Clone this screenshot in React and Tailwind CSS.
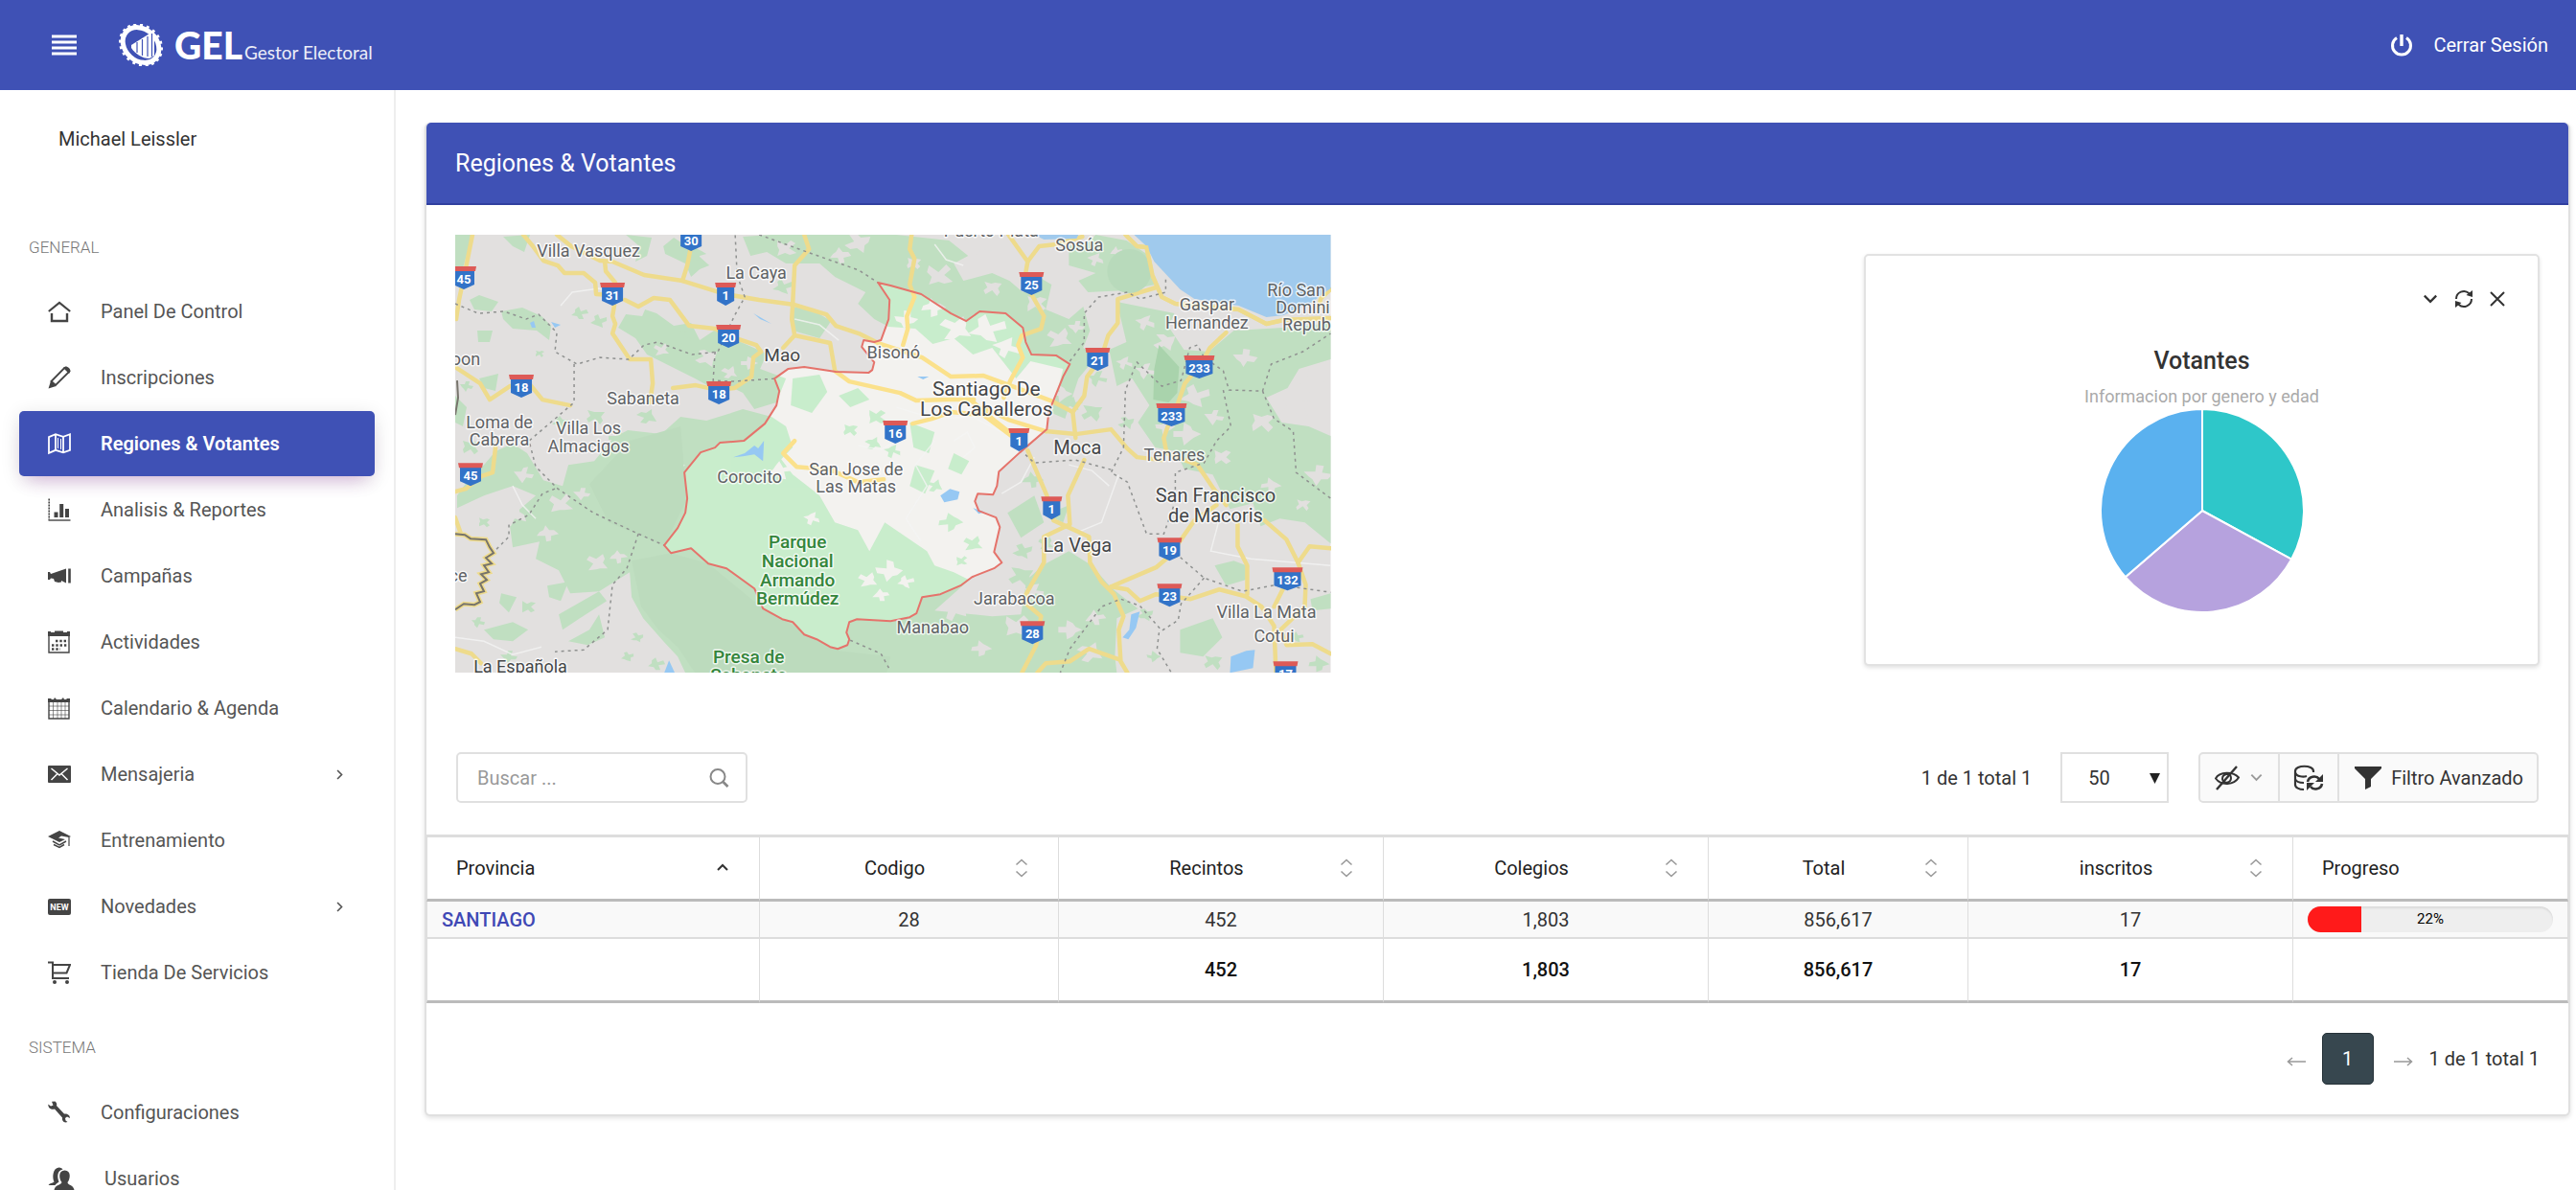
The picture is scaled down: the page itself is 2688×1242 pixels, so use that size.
import React, { useState } from 'react';

const roboto = "font-['Roboto',sans-serif]";

/* ---------- Icons ---------- */

const Icon = ({ children, className = 'size-6', box = '0 0 24 24' }) => (
    <svg viewBox={box} className={className} fill="none" stroke="currentColor" strokeWidth="2" aria-hidden="true">
        {children}
    </svg>
);

const HomeIcon = () => (
    <Icon>
        <path d="M.8 12 12 3l11.2 9" strokeWidth="2.2" />
        <path d="M4 14v8h16v-8" strokeWidth="2.4" />
    </Icon>
);

const PencilIcon = () => (
    <Icon>
        <path d="M3.5 16 17.5 1.8c1.6-1 5.4 2.6 4.4 4.4L8 20z" strokeWidth="1.8" />
        <path d="M3 15.5 8.5 21 .5 23.6z" fill="currentColor" stroke="none" />
        <path d="m16 2 2.5-1.6c2.5 0 5 2.5 5 5L22 8z" fill="currentColor" stroke="none" />
    </Icon>
);

const MapIcon = () => (
    <Icon>
        <path d="M1 5.2 8 2.2l8 2.6 7-2.6v16.6l-7 2.6-8-2.6-7 3zM8 2.2v16.6M16 4.8v16.6" strokeWidth="1.8" />
        <path d="M10.5 6v11M13.5 7v11" strokeWidth="1" />
    </Icon>
);

const ChartIcon = () => (
    <Icon>
        <path d="M1.2.5v22" strokeWidth="1.6" strokeDasharray="2 1" />
        <path d="M.5 23h23" strokeWidth="1.4" />
        <path d="M8.5 14.5V20M14.2 6v14M20 11v9" strokeWidth="4" />
    </Icon>
);

const MegaphoneIcon = () => (
    <Icon>
        <path d="M0 8h2l1 2L19 4.500v15L14 17v1.500l-3 .5-4-1-1-3-3-.500L2 16H0z" fill="currentColor" stroke="none" />
        <path d="M22.500 4.500v15" strokeWidth="2.600" />
    </Icon>
);

const EventIcon = () => (
    <Icon>
        <path d="M1 3v20h21V3" strokeWidth="1.4" />
        <path d="M0 1h3v1h4V.5h9V2h4V1h3v5H0z" fill="currentColor" stroke="none" />
        <path d="M8 11h13M4 15.500h17M4 19.500h9" strokeDasharray="2.400 1.900" strokeWidth="2.400" />
    </Icon>
);

const CalendarIcon = () => (
    <Icon>
        <path d="M1 3v20h21V3" strokeWidth="1.4" />
        <path d="M0 2h3l1 1h2l1-2 2 2h5l2-2 1 2h2l1-1h3v4H0z" fill="currentColor" stroke="none" />
        <path d="M1 10h21M1 14.500h21M1 19h21M5.500 6v17M10 6v17M14 6v17M18 6v17" strokeWidth=".6" />
    </Icon>
);

const MailIcon = () => (
    <Icon>
        <rect x="0" y="3" width="24" height="18" rx="1" fill="currentColor" stroke="none" />
        <path d="m3.500 6 8.500 7 8.500-7M3.500 18 9.500 12M20.500 18l-6-6" stroke="#fff" strokeWidth="1.5" />
    </Icon>
);

const GraduationIcon = () => (
    <Icon>
        <path d="m0 8 12-6 12 6-2 1-8-1.500-3 2 7 1.500-6 3z" fill="currentColor" stroke="none" />
        <path d="m5 13 7 4 7-4M6 16.500l6 3 5-3" strokeWidth="1.5" />
        <path d="M22 9v9" strokeWidth="1.2" />
    </Icon>
);

const NewIcon = () => (
    <Icon>
        <rect x="0" y="4" width="24" height="17" rx="2" fill="currentColor" stroke="none" />
        <text x="12" y="16" fontSize="9" fontWeight="700" textAnchor="middle" fill="#fff" stroke="none">
            NEW
        </text>
    </Icon>
);

const CartIcon = () => (
    <Icon>
        <path d="M0 1.500h5V18h17M5 12.500h14.500L23 4H5" strokeWidth="2" />
        <circle cx="7" cy="22" r="2" fill="currentColor" stroke="none" />
        <circle cx="20" cy="22" r="2" fill="currentColor" stroke="none" />
    </Icon>
);

const WrenchIcon = () => (
    <Icon>
        <path
            d="M4 .8 7.500.5c2 1.500 2 3.500 1.500 4.500l8 8.500c3-.5 6 1 6 4.500l-3-1.500-2 1.500.500 2.500 2 1.500c-4 1.500-6-1.500-5.500-4.500L7 8.500C4 9.500 0 8 .3 3.500L3 5.500l2.500-1z"
            fill="currentColor"
            stroke="none"
        />
    </Icon>
);

const UsersIcon = () => (
    <Icon className="h-6 w-7" box="0 0 27 24">
        <path d="M0 19c1-2 4-2 6-3.500C4 12 4 1 11 .5c2 0 3.500 1 4 2-6 1-6 8-4 13-2 1.500-3 2-4 3.500z" fill="currentColor" stroke="none" />
        <path
            d="M17 3.500c7 0 6 9 3 12.500 0 3 6 2.500 7 8H6c1-5.500 7-5 8-8-3-3.500-4-12.500 3-12.500z"
            fill="currentColor"
            stroke="none"
        />
    </Icon>
);

const ChevronIcon = ({ className }) => (
    <Icon className={className} box="0 0 16 16">
        <path d="m2.500 5 5.500 5.500L13.500 5" />
    </Icon>
);

const SortIcon = ({ active }) =>
    active ? (
        <Icon className="h-5 w-4 text-[#333]" box="0 0 16 20">
            <path d="m3 12 5-5 5 5" />
        </Icon>
    ) : (
        <Icon className="h-5 w-4 text-[#999]" box="0 0 16 20">
            <path d="m2.500 6.500 5.500-5 5.500 5M2.500 13.500l5.500 5 5.500-5" strokeWidth="1.6" />
        </Icon>
    );

/* ---------- Header ---------- */

const teeth = Array.from({ length: 20 }, (_, i) => i * 18);

const Logo = () => (
    <a href="#inicio" className="flex items-center">
        <svg viewBox="0 0 46 44" className="h-11 w-[46px]" aria-hidden="true">
            <g transform="rotate(42 23 22)">
                <ellipse cx="23" cy="22" rx="20.500" ry="16.500" fill="none" stroke="#fff" strokeWidth="5" />
                {teeth.map((a) => (
                    <rect
                        key={a}
                        x={23 + 23 * Math.cos((a * Math.PI) / 180) - 1.5}
                        y={22 + 19.5 * Math.sin((a * Math.PI) / 180) - 1.5}
                        width="3"
                        height="3"
                        fill="#fff"
                        transform={`rotate(${a} ${23 + 23 * Math.cos((a * Math.PI) / 180)} ${22 + 19.5 * Math.sin((a * Math.PI) / 180)})`}
                    />
                ))}
            </g>
            <path d="m13 22 24-15v26l-5 3c-8 0-15-5-19-11z" fill="#fff" />
            <path d="M19 19v11M24.500 16v17M30 13v21M34.500 10v24" stroke="#3f51b5" strokeWidth="1.2" />
        </svg>
        <span className="ml-3 flex items-baseline gap-0.5 font-['Lato',sans-serif] text-white">
            <span className="text-[39px] leading-[44px] font-black">GEL</span>
            <span className="text-[19px] text-white/90">Gestor Electoral</span>
        </span>
    </a>
);

const Header = ({ onToggle }) => (
    <header className="flex h-[94px] shrink-0 items-center justify-between bg-[#3f51b5] pr-[29px] pl-[54px] text-white">
        <div className="flex items-center gap-11">
            <button type="button" onClick={onToggle} aria-label="Menu">
                <Icon className="h-[22px] w-[26px]" box="0 0 26 22">
                    <path d="M0 2h26M0 8h26M0 14h26M0 20h26" strokeWidth="3" />
                </Icon>
            </button>
            <Logo />
        </div>
        <a href="#salir" className="flex items-center gap-[21px] text-[20px]">
            <Icon className="size-6">
                <path d="M7 4.500a9.500 9.500 0 1 0 10 0" strokeWidth="3" />
                <path d="M12 1v12" strokeWidth="3.4" />
            </Icon>
            Cerrar Sesión
        </a>
    </header>
);

/* ---------- Sidebar ---------- */

const generalItems = [
    { id: 'panel', label: 'Panel De Control', icon: HomeIcon },
    { id: 'inscripciones', label: 'Inscripciones', icon: PencilIcon },
    { id: 'regiones', label: 'Regiones & Votantes', icon: MapIcon },
    { id: 'analisis', label: 'Analisis & Reportes', icon: ChartIcon },
    { id: 'campanas', label: 'Campañas', icon: MegaphoneIcon },
    { id: 'actividades', label: 'Actividades', icon: EventIcon },
    { id: 'calendario', label: 'Calendario & Agenda', icon: CalendarIcon },
    { id: 'mensajeria', label: 'Mensajeria', icon: MailIcon, children: true },
    { id: 'entrenamiento', label: 'Entrenamiento', icon: GraduationIcon },
    { id: 'novedades', label: 'Novedades', icon: NewIcon, children: true },
    { id: 'tienda', label: 'Tienda De Servicios', icon: CartIcon },
];

const systemItems = [
    { id: 'configuraciones', label: 'Configuraciones', icon: WrenchIcon },
    { id: 'usuarios', label: 'Usuarios', icon: UsersIcon },
];

const NavItem = ({ item, active, onSelect }) => {
    const ItemIcon = item.icon;
    return (
        <li>
            <a
                href={`#${item.id}`}
                onClick={() => onSelect(item.id)}
                className={
                    active
                        ? 'flex h-[68px] items-center gap-[31px] rounded-[5px] bg-[#3f51b5] px-[30px] text-[20px] font-semibold text-white shadow-[0_12px_20px_-10px_rgba(156,39,176,0.3),0_4px_20px_rgba(0,0,0,0.12)]'
                        : 'flex h-[68px] items-center gap-[31px] px-[30px] text-[20px] text-[#555]'
                }
            >
                <span className={active ? 'text-white' : 'text-[#444]'}>
                    <ItemIcon />
                </span>
                <span className="flex-1">{item.label}</span>
                {item.children && <ChevronIcon className="size-[13px] -rotate-90 text-[#555]" />}
            </a>
        </li>
    );
};

const Sidebar = ({ active, onSelect }) => (
    <aside className="w-[413px] shrink-0 overflow-hidden border-r-2 border-[#eee] pt-9">
        <div className="pl-[61px] text-[20px] leading-[30px] text-[#333]">Michael Leissler</div>
        <h2 className="mt-[86px] pl-[30px] text-[17px] leading-6 font-light text-[#777]">GENERAL</h2>
        <ul className="mx-5 mt-[21px] flex flex-col gap-px">
            {generalItems.map((item) => (
                <NavItem key={item.id} item={item} active={active === item.id} onSelect={onSelect} />
            ))}
        </ul>
        <h2 className="mt-8 pl-[30px] text-[17px] leading-6 font-light text-[#777]">SISTEMA</h2>
        <ul className="mx-5 mt-[22px] flex flex-col gap-px">
            {systemItems.map((item) => (
                <NavItem key={item.id} item={item} active={active === item.id} onSelect={onSelect} />
            ))}
        </ul>
    </aside>
);

/* ---------- Map ---------- */

const province =
    'M441 50 453 68 452 88 444 110 437 112 426 110 424 117 437 133 435 141 431 144 397 143 364 138 347 140 333 150 338 163 335 178 323 197 301 215 276 217 271 222 256 227 239 248 242 275 240 290 232 306 218 324 225 332 246 327 264 343 283 348 312 369 321 390 341 401 352 404 364 417 377 422 391 430 399 432 409 428 411 422 408 415 411 404 419 401 454 403 474 399 481 395 487 378 506 375 527 366 539 357 562 348 570 342 562 331 568 305 564 295 546 288 542 278 545 270 561 271 565 262 567 247 589 227 617 203 619 185 634 148 641 135 627 126 601 125 595 112 592 97 574 82 547 80 533 90 517 82 486 62 454 53Z';

const forests = [
    'M0 0H18L8 35H0Z',
    'M50 2 78 0 72 18 60 12Z',
    'M178 0 205 3 200 22 188 28 192 12Z',
    'M217 12 228 3 246 15 265 32 255 36 246 44 240 30 219 20Z',
    'M300 2 330 0 460 0 515 6 535 22 520 30 530 48 560 40 578 48 592 60 610 45 622 52 616 78 640 88 655 75 662 100 655 118 668 128 650 150 636 192 622 186 634 140 600 132 585 150 560 118 540 125 520 108 498 114 480 98 452 96 437 88 420 72 428 60 396 44 380 30 345 30 325 18 308 22Z',
    'M352 75 375 80 392 90 380 108 352 100Z',
    'M170 97 178 83 195 85 198 78 210 82 228 95 246 92 255 110 270 100 300 113 325 124 318 140 345 150 335 175 312 182 300 165 280 155 268 160 250 150 230 140 200 125 188 108Z',
    'M15 68 25 63 45 70 38 80 20 78Z',
    'M48 80 70 76 90 85 100 95 98 110 85 100 60 98 50 88Z',
    'M23 100 39 100 36 112 24 112Z',
    'M25 150 45 145 42 163 30 160Z',
    'M0 168 12 180 8 200 0 196Z',
    'M2 272 12 258 30 240 42 226 60 218 75 228 92 256 112 262 118 240 145 236 165 212 180 204 215 208 235 190 262 194 300 182 330 190 345 200 352 222 340 234 352 250 380 272 396 300 420 308 432 330 448 300 470 315 492 330 500 345 520 352 536 360 500 392 560 398 590 396 596 360 614 344 640 330 664 345 684 368 712 390 690 400 688 440 690 457 240 457 232 440 218 425 196 400 184 378 182 352 150 372 120 374 108 350 84 338 88 320 60 326 56 296 84 272 60 262 30 272 2 285Z',
    'M96 366 118 362 110 382 98 378Z',
    'M48 374 64 378 56 394 46 384Z',
    'M108 396 136 380 150 372 158 382 130 400 112 412Z',
    'M30 412 60 404 76 412 60 424 40 422Z',
    'M150 396 156 420 138 428 118 424 140 412Z',
    'M640 12 660 8 668 0 700 6 724 22 730 52 700 58 660 60 650 48 668 40 640 32Z',
    'M690 70 720 76 750 82 744 96 760 120 786 122 812 100 880 96 913 92 913 130 880 140 868 160 846 170 862 196 890 200 913 210 913 322 886 300 860 296 840 304 832 280 808 286 790 250 760 244 752 226 730 222 712 196 724 178 706 150 690 158 682 120 700 112Z',
    'M792 345 812 340 828 346 824 360 804 366Z',
    'M892 380 913 374 913 390 894 392Z',
    'M756 412 790 400 800 420 780 440 756 436Z',
    'M576 290 604 272 614 300 590 316Z',
    'M640 282 634 300 616 292Z',
    'M480 240 500 246 490 270 474 262Z',
    'M520 228 536 236 528 250 514 244Z',
    'M474 196 500 206 494 228 478 222Z',
    'M400 168 420 160 432 172 412 180Z',
    'M352 150 380 146 388 164 372 186 350 178Z',
];

/* clearings: [x, y, radius] */
const clearings = [
    [345, 14, 7], [402, 22, 6], [420, 8, 8], [478, 30, 5], [505, 42, 9], [546, 10, 9], [560, 56, 6], [498, 76, 7],
    [522, 98, 10], [556, 98, 11], [470, 88, 7], [575, 118, 8], [606, 72, 7], [630, 108, 8], [648, 96, 5], [632, 166, 6],
    [215, 120, 5], [262, 128, 7], [286, 144, 5], [306, 134, 5], [110, 280, 8], [132, 270, 5], [72, 250, 6], [60, 292, 9],
    [96, 312, 6], [148, 342, 7], [170, 336, 5], [340, 246, 7], [372, 296, 5], [430, 360, 6], [452, 350, 8], [444, 376, 5],
    [470, 362, 5], [520, 392, 8], [548, 432, 6], [586, 408, 9], [604, 372, 6], [640, 412, 7], [668, 400, 6], [662, 436, 8],
    [720, 92, 6], [740, 112, 7], [772, 168, 9], [792, 190, 6], [824, 128, 7], [842, 196, 8], [876, 182, 10], [892, 152, 9],
    [740, 200, 6], [762, 208, 8], [800, 232, 6], [850, 262, 6], [884, 282, 5], [900, 250, 8], [690, 18, 4], [668, 26, 5],
    [720, 142, 6], [698, 134, 5],
];

const thickets = [
    [250, 20, 6], [130, 82, 5], [150, 90, 5], [342, 54, 6], [236, 108, 6], [12, 158, 4], [88, 124, 3], [412, 204, 5],
    [440, 190, 6], [436, 218, 5], [456, 226, 5], [500, 262, 5], [516, 300, 7], [540, 322, 6], [528, 340, 4], [602, 256, 6],
    [592, 330, 6], [616, 322, 5], [590, 356, 8], [670, 150, 6], [664, 186, 7], [646, 176, 5], [700, 196, 5], [728, 440, 4],
    [720, 396, 5], [790, 446, 6], [900, 448, 6], [878, 420, 4], [30, 300, 4], [76, 388, 5], [56, 440, 5], [180, 440, 4],
    [210, 448, 5], [24, 404, 4], [190, 420, 4], [146, 190, 6], [170, 212, 6], [110, 196, 5], [16, 222, 6], [200, 190, 6],
];

// Jagged outline round a point, stable for a given position
const jagged = ([x, y, r]) =>
    Array.from({ length: 11 }, (_, i) => {
        const a = (i / 11) * Math.PI * 2;
        const k = 0.3 + Math.abs(Math.sin(x * 3.1 + y * 1.7 + i * 4.3)) * 1.2;
        return `${Math.round(x + Math.cos(a) * r * k * 1.3)},${Math.round(y + Math.sin(a) * r * k)}`;
    }).join(' ');

const roads = [
    'M71 0 81 12 92 27 107 32 114 40 134 40 146 50 147 62 164 63',
    'M106 0 121 12 151 27 164 28 197 42 237 48 282 62 317 68 354 73 387 83 397 95 421 103 441 113 487 128 517 148 551 147 581 158 621 173 644 185',
    'M156 28 157 38 167 50',
    'M18 0 11 35 4 68 1 88',
    'M246 12 242 32 237 48',
    'M177 68 191 75 207 66 224 68 244 95 271 98 284 105 314 115 319 122 311 128 309 148 291 160 274 162 251 157 227 160',
    'M166 73 164 85 167 93 164 103 182 130 204 130 206 155 203 175',
    'M364 0 369 15 354 32 352 72 351 88 354 105 391 113 396 142 411 153 464 165 481 173 514 172 541 172',
    'M354 105 342 118',
    'M0 138 26 155 36 172 57 158 77 155 91 172 120 178',
    'M476 0 474 15 479 25 474 52 479 65 471 85 472 98 467 115',
    'M577 0 597 28 594 45 601 62 614 85 611 98 591 105 587 115 592 128 579 152 572 170',
    'M597 28 609 12 627 10 654 2',
    'M699 0 711 12 721 13 727 42 737 65 751 72 817 78 846 93 864 89 913 87',
    'M900 76 903 66 913 57',
    'M731 55 691 67 691 92 681 105 677 118 671 132 659 148 656 168 644 185 647 212',
    'M616 205 647 208 684 203 701 223 711 232 737 235',
    'M804 102 787 118 778 135 761 155 754 175 745 195 739 212 742 228 774 240 791 265 804 282',
    'M477 197 497 192 517 185 551 188 587 215',
    'M537 172 564 195 588 214',
    'M551 180 577 193 616 205',
    'M597 225 617 272 624 298 661 315 662 342 674 362 687 375 697 398 692 412 694 445 701 457',
    'M656 235 639 272 641 302 614 315 614 342 597 372 592 382 611 398 606 428 591 457',
    'M607 457 616 447 641 445 661 432 692 443',
    'M684 367 731 347 745 335 771 298 794 282',
    'M684 367 701 370 714 382 731 375 767 380 797 370 824 377 841 388 854 408 856 457',
    'M816 302 816 325 826 345 826 375',
    'M844 298 867 318 879 342 891 325 913 327',
    'M879 342 887 365 886 388 861 412 867 428 894 427 913 437',
    'M864 368 854 388',
    'M42 222 39 248 27 252 11 265 0 268',
    'M0 295 6 312',
    'M0 432 17 437 27 447',
    'M354 215 342 228 356 242 391 245 420 258 447 255',
];

const minorRoads = [
    'M110 74 122 60 150 56 170 66', 'M354 88 380 94 400 110', 'M0 420 30 424 60 438 90 430', 'M239 240 220 256 216 276',
    'M60 262 70 282 84 296', 'M500 215 480 240 492 262 470 296 486 320', 'M604 232 590 258 570 270', 'M640 240 664 246 682 262',
    'M520 215 534 206 542 222 530 232', 'M796 300 788 330 830 338 913 345', 'M692 250 674 300 650 310', 'M500 10 512 26 530 32',
    'M460 180 500 192 540 190 570 206', 'M420 220 444 224 470 210',
];

const boundaries = [
    'M0 72 24 82 51 80 74 88 87 83 106 102 104 122 127 135 151 128 181 130 197 115 211 112 247 125 274 122 291 85 302 65 294 42 292 0',
    'M317 0 367 18 421 37 441 50',
    'M124 135 124 175 77 215 84 242 107 265 144 290 191 312 218 324',
    'M271 122 269 152 291 153 334 150',
    'M104 265 91 270 77 292 56 303 56 315 41 330',
    'M191 312 179 348 164 365 159 412 134 433 104 435',
    'M412 423 444 437 454 455',
    'M641 132 656 112 656 82 671 65 701 60 714 67 741 60 741 43',
    'M697 222 699 162 711 133 737 158 757 152 766 118 774 115 781 128 801 142 807 162 842 163 851 135 884 122 913 103',
    'M842 163 854 192 874 205 877 248 913 275',
    'M801 162 809 200 794 215 781 238 751 248 751 278 739 312 721 312 701 258 684 248 697 222',
    'M684 245 647 235 604 238 592 227',
    'M751 332 781 358 821 372 857 365 913 373',
    'M781 358 757 385 754 402 737 413 714 387 694 380 674 388 641 432 631 457',
    'M734 415 732 432 747 457',
];

const lakes = [
    'M290 232 302 228 312 220 316 223 322 215 321 236 312 229 300 231Z',
    'M506 272 516 265 526 268 524 276 510 279Z',
    'M540 285 552 289 546 291Z',
    'M705 396 714 393 710 410 702 422 696 420 703 412Z',
    'M809 440 825 434 834 433 832 452 808 457Z',
    'M218 457 223 444 229 457Z',
    'M78 92 82 90 84 97 80 97Z',
    'M100 91 110 94 104 97Z',
    'M311 82 330 93 318 88Z',
    'M482 148 494 148 488 151Z',
];

const shields = [
    [9, 45, '45'], [164, 62, '31'], [246, 5, '30'], [282, 62, '1'], [285, 106, '20'], [69, 158, '18'], [275, 165, '18'],
    [601, 51, '25'], [670, 130, '21'], [776, 138, '233'], [747, 188, '233'], [459, 206, '16'], [588, 214, '1'],
    [16, 250, '45'], [622, 285, '1'], [745, 328, '19'], [745, 376, '23'], [868, 359, '132'], [602, 415, '28'], [866, 457, '17'],
];

const towns = [
    [139, 23, 'Villa Vasquez'], [314, 46, 'La Caya'], [457, 129, 'Bisonó'], [651, 17, 'Sosúa'], [784, 79, 'Gaspar'],
    [784, 98, 'Hernandez'], [877, 64, 'Río San'], [884, 82, 'Domini'], [888, 100, 'Repub'], [750, 236, 'Tenares'],
    [583, 386, 'Jarabacoa'], [498, 416, 'Manabao'], [846, 400, 'Villa La Mata'], [854, 425, 'Cotui'], [307, 259, 'Corocito'],
    [418, 251, 'San Jose de'], [418, 269, 'Las Matas'], [139, 208, 'Villa Los'], [139, 227, 'Almacigos'], [46, 202, 'Loma de'],
    [46, 220, 'Cabrera'], [196, 177, 'Sabaneta'], [11, 136, 'oon'], [3, 362, 'ce'], [559, 2, 'Puerto Plata'],
];

const cities = [
    [341, 132, 'Mao', 19], [554, 168, 'Santiago De', 21], [554, 189, 'Los Caballeros', 21], [649, 229, 'Moca', 20],
    [793, 279, 'San Francisco', 20], [793, 300, 'de Macoris', 20], [649, 331, 'La Vega', 20], [68, 457, 'La Española', 18],
];

const parks = [
    [357, 327, 'Parque'], [357, 347, 'Nacional'], [357, 367, 'Armando'], [357, 386, 'Bermúdez'], [306, 447, 'Presa de'],
    [306, 466, 'Sabaneta'],
];

const Shield = ({ x, y, label }) => {
    const w = label.length === 3 ? 15 : label.length === 2 ? 12 : 10;
    return (
        <g transform={`translate(${x} ${y})`}>
            <path d={`M${-w + 1}-8V7L0 12 ${w - 1} 7V-8Z`} fill="#3273c8" />
            <path d={`M${-w - 1}-12H${w + 1}L${w}-7H${-w}Z`} fill="#dd5a57" />
            <text y="6" textAnchor="middle" fontSize="13" fontWeight="700" fill="#fff">
                {label}
            </text>
        </g>
    );
};

const Terrain = ({ land, green, road }) => (
    <>
        <rect width="913" height="457" fill={land} />
        <g fill={green}>
            {forests.map((d) => (
                <path key={d} d={d} />
            ))}
            {thickets.map((p) => (
                <polygon key={p.join()} points={jagged(p)} />
            ))}
        </g>
        <g fill={land}>
            {clearings.map((p) => (
                <polygon key={p.join()} points={jagged(p)} />
            ))}
        </g>
        <g fill="none" stroke="#f4f4f4" strokeWidth="1.500" opacity=".8">
            {minorRoads.map((d) => (
                <path key={d} d={d} />
            ))}
        </g>
        <g fill="none" stroke={road} strokeWidth="4.500" strokeLinejoin="round" strokeLinecap="round">
            {roads.map((d) => (
                <path key={d} d={d} />
            ))}
        </g>
    </>
);

const RegionMap = () => (
    <svg viewBox="0 0 913 457" className="w-[42%] shrink-0 self-start" role="img" aria-label="Mapa de Santiago">
        <clipPath id="province">
            <path d={province} />
        </clipPath>
        <Terrain land="#e2e0df" green="#c0dfc1" road="#eedb8c" />
        <path d="M182 215 235 200 239 248 242 275 218 324 160 300 140 260Z" fill="#bcdbbd" />
        <path d="M184 340 225 332 264 343 321 390 400 434 454 440 450 457 250 457 232 430 212 412 194 388Z" fill="#bcdbbd" />
        <circle cx="703" cy="38" r="23" fill="#b8dabb" />
        <path d="M734 115 755 138 753 165 744 175 728 172 729 140Z" fill="#a9d3ac" />
        <path d="M708 0 721 12 729 28 756 57 771 67 817 74 846 86 864 84 894 70 913 56V0Z" fill="#a0caed" />
        <path d="M604 0 614 5 648 4 650 0Z" fill="#a0caed" />
        <path d="M699 0 711 12 721 13 727 42 737 65 751 72 817 78 846 93 864 89 913 87" fill="none" stroke="#eedb8c" strokeWidth="4" />

        <g clipPath="url(#province)">
            <Terrain land="#f3f2ef" green="#c9edcc" road="#fbe18b" />
        </g>
        <g fill="#96c8f3">
            {lakes.map((d) => (
                <path key={d} d={d} />
            ))}
        </g>
        <g fill="none" stroke="#8f9190" strokeWidth="1.500" strokeDasharray="3 4">
            {boundaries.map((d) => (
                <path key={d} d={d} />
            ))}
        </g>
        <path
            d="M0 312 10 313 16 317 32 318 36 326 40 332 32 337 38 343 30 345 35 352 27 354 33 360 26 364 30 372 22 374 26 383 20 386 9 385 0 391"
            fill="none"
            stroke="#eedb8c"
            strokeWidth="5"
        />
        <path
            d="M0 312 10 313 16 317 32 318 36 326 40 332 32 337 38 343 30 345 35 352 27 354 33 360 26 364 30 372 22 374 26 383 20 386 9 385 0 391M2 152 3 170 0 188"
            fill="none"
            stroke="#77746c"
            strokeWidth="2"
        />
        <path d={province} fill="none" stroke="#e5736b" strokeWidth="2" strokeLinejoin="round" />

        {shields.map(([x, y, label]) => (
            <Shield key={`${x}-${y}`} x={x} y={y} label={label} />
        ))}
        <g textAnchor="middle" stroke="#fff" strokeOpacity=".75" strokeWidth="3" strokeLinejoin="round" className="[paint-order:stroke]">
            {towns.map(([x, y, name]) => (
                <text key={name + y} x={x} y={y} fontSize="18" fill="#5f6265">
                    {name}
                </text>
            ))}
            {cities.map(([x, y, name, size]) => (
                <text key={name} x={x} y={y} fontSize={size} fill="#444648">
                    {name}
                </text>
            ))}
            {parks.map(([x, y, name]) => (
                <text key={name} x={x} y={y} fontSize="19" fontWeight="500" fill="#34853b">
                    {name}
                </text>
            ))}
        </g>
    </svg>
);

/* ---------- Pie chart ---------- */

const slices = [
    { color: '#2ec7c9', from: 0, to: 118.6 },
    { color: '#b6a2de', from: 118.6, to: 229.2 },
    { color: '#5ab1ef', from: 229.2, to: 360 },
];

const slicePath = (from, to) => {
    const point = (deg) => {
        const a = ((deg - 90) * Math.PI) / 180;
        return `${107 + 106 * Math.cos(a)} ${107 + 106 * Math.sin(a)}`;
    };
    return `M107 107L${point(from)}A106 106 0 0 1 ${point(to)}Z`;
};

const VotersCard = () => (
    <section className="mt-5 flex h-[430px] w-[705px] flex-col items-center rounded-[5px] border-2 border-[#e2e2e2] bg-white shadow-[0_2px_4px_rgba(0,0,0,0.12)]">
        <div className="mt-[35px] flex h-5 items-center gap-[16px] self-end pr-[33px] text-[#333]">
            <button type="button" aria-label="Contraer">
                <ChevronIcon className="size-[18px]" />
            </button>
            <button type="button" aria-label="Actualizar">
                <Icon className="size-5" box="0 0 20 20">
                    <path d="M2 10a8 8 0 0 1 13.500-5.800M18 10a8 8 0 0 1-13.500 5.800" />
                    <path d="M19 1v7l-6.500-2zM1 19v-7l6.500 2z" fill="currentColor" stroke="none" />
                </Icon>
            </button>
            <button type="button" aria-label="Cerrar">
                <Icon className="size-[18px]" box="0 0 18 18">
                    <path d="m2 2 14 14M16 2 2 16" />
                </Icon>
            </button>
        </div>
        <h3 className="mt-[37px] text-[25px] leading-[36px] font-medium text-[#333]">Votantes</h3>
        <p className="mt-[7px] text-[18px] leading-6 text-[#aaa]">Informacion por genero y edad</p>
        <svg viewBox="0 0 214 214" className="size-[214px]" role="img" aria-label="Votantes por genero y edad">
            {slices.map((s) => (
                <path key={s.color} d={slicePath(s.from, s.to)} fill={s.color} stroke="#fff" strokeWidth="2" />
            ))}
        </svg>
    </section>
);

/* ---------- Table ---------- */

const columns = [
    { key: 'provincia', label: 'Provincia', width: 'w-[347px]' },
    { key: 'codigo', label: 'Codigo', width: 'w-[312px]' },
    { key: 'recintos', label: 'Recintos', width: 'w-[339px]' },
    { key: 'colegios', label: 'Colegios', width: 'w-[339px]' },
    { key: 'total', label: 'Total', width: 'w-[271px]' },
    { key: 'inscritos', label: 'inscritos', width: 'w-[339px]' },
];

const rows = [
    { provincia: 'SANTIAGO', codigo: '28', recintos: '452', colegios: '1,803', total: '856,617', inscritos: '17', progreso: 22 },
];

const totals = { recintos: '452', colegios: '1,803', total: '856,617', inscritos: '17' };

const Toolbar = ({ query, onQuery }) => (
    <div className="mt-[83px] flex items-center justify-between px-[31px]">
        <label className="flex h-[53px] w-[304px] items-center rounded-[5px] border-2 border-[#e0e0e0] pr-[17px] pl-5">
            <input
                type="text"
                placeholder="Buscar ..."
                aria-label="Buscar"
                value={query}
                onChange={(e) => onQuery(e.target.value)}
                className="w-full min-w-0 text-[20px] outline-none placeholder:text-[#999]"
            />
            <Icon className="size-[22px] shrink-0 text-[#888]" box="0 0 22 22">
                <circle cx="10" cy="9.500" r="7.500" />
                <path d="m15.500 15 5 5" strokeWidth="2.600" />
            </Icon>
        </label>

        <div className="flex items-center text-[20px] text-[#333]">
            <span>1 de 1 total 1</span>
            <div className="relative ml-[30px]">
                <select
                    aria-label="Registros por pagina"
                    defaultValue="50"
                    className="h-[53px] w-[113px] appearance-none border-2 border-[#e0e0e0] bg-white pl-[27px] outline-none"
                >
                    <option>10</option>
                    <option>25</option>
                    <option>50</option>
                    <option>100</option>
                </select>
                <svg viewBox="0 0 11 11" className="pointer-events-none absolute top-[22px] right-[9px] size-[11px]" aria-hidden="true">
                    <path d="M0 0h11L5.500 11z" fill="#222" />
                </svg>
            </div>
            <div className="ml-[31px] flex h-[53px] divide-x-2 divide-[#e0e0e0] rounded-[5px] border-2 border-[#e0e0e0] bg-[#fafafa]">
                <button type="button" aria-label="Columnas visibles" className="flex w-[83px] items-center justify-center gap-2.5">
                    <Icon className="size-[26px]" box="0 0 26 26">
                        <path d="M1 13.500C5 6 19 6 25 12.500c-5 8-18 9-24 1z" />
                        <path d="M8 14c0-6 9-7 9-1 0 5-8 7-9 1z" />
                        <path d="M23 1 2 25" strokeWidth="2.400" />
                    </Icon>
                    <ChevronIcon className="size-[15px] text-[#999]" />
                </button>
                <button type="button" aria-label="Recargar datos" className="flex w-[62px] items-center justify-center">
                    <Icon className="h-[28px] w-[32px]" box="0 0 32 28">
                        <path d="M21 7c0-7-19-7-19 0v14c0 3 4 5 9 5M2 8c1 5 9 5 12 4M2 15c1 3 5 4 9 4M21 6v2" strokeWidth="2.200" />
                        <path d="M15 18c1-6 9-7 12-3M30 20c-1 6-9 7-12 3" strokeWidth="2.600" />
                        <path d="M31 10v8h-8zM14 27v-8h8z" fill="currentColor" stroke="none" />
                    </Icon>
                </button>
                <button type="button" className="flex items-center gap-[10px] pr-[14px] pl-[16px]">
                    <svg viewBox="0 0 28 24" className="h-6 w-7" aria-hidden="true">
                        <path d="M0 0h28v2L17 13v8l-6 3V13L0 2z" fill="#333" />
                    </svg>
                    Filtro Avanzado
                </button>
            </div>
        </div>
    </div>
);

const ProgressBar = ({ value }) => (
    <div
        role="progressbar"
        aria-valuenow={value}
        className="grid h-[27px] items-center overflow-hidden rounded-full bg-[#eee] shadow-[inset_0_2px_2px_rgba(0,0,0,0.08)]"
    >
        <div className="col-start-1 row-start-1 h-full bg-[#ff1a1a]" style={{ width: `${value}%` }} />
        <span className="col-start-1 row-start-1 text-center text-[15px] leading-none text-black">{value}%</span>
    </div>
);

const RegionsTable = ({ rows }) => (
    <table className="mt-[33px] w-full table-fixed border-separate border-spacing-0 border-t-[3px] border-[#ddd] text-[20px] text-[#333]">
        <thead>
            <tr className="h-[67px]">
                {columns.map((col, i) => (
                    <th
                        key={col.key}
                        scope="col"
                        className={`${col.width} border-b-[3px] border-l border-b-[#bbb] border-l-[#ddd] px-[30px] font-normal text-[#222]`}
                    >
                        <button type="button" className="flex w-full items-center gap-3.5">
                            <span className={i === 0 ? 'flex-1 text-left' : 'flex-1 text-center'}>{col.label}</span>
                            <SortIcon active={i === 0} />
                        </button>
                    </th>
                ))}
                <th scope="col" className="border-x border-b-[3px] border-x-[#ddd] border-b-[#bbb] px-[30px] text-left font-normal text-[#222]">
                    Progreso
                </th>
            </tr>
        </thead>
        <tbody>
            {rows.map((row) => (
                <tr key={row.provincia} className="h-[39px] bg-[#f9f9f9]">
                    {columns.map((col, i) => (
                        <td key={col.key} className="border-b-2 border-l border-[#ddd] px-[15px] text-center first:text-left">
                            {i === 0 ? (
                                <a href="#santiago" className="font-medium text-[#3f48b5]">
                                    {row.provincia}
                                </a>
                            ) : (
                                row[col.key]
                            )}
                        </td>
                    ))}
                    <td className="border-x border-b-2 border-[#ddd] px-[15px]">
                        <ProgressBar value={row.progreso} />
                    </td>
                </tr>
            ))}
        </tbody>
        <tfoot>
            <tr className="h-[67px]">
                {columns.map((col) => (
                    <td key={col.key} className="border-b-[3px] border-l border-b-[#bbb] border-l-[#ddd] text-center font-medium text-[#111]">
                        {totals[col.key]}
                    </td>
                ))}
                <td className="border-x border-b-[3px] border-x-[#ddd] border-b-[#bbb]" />
            </tr>
        </tfoot>
    </table>
);

const Pagination = () => (
    <nav className="flex items-center justify-end py-[31px] pr-[30px] text-[20px] text-[#333]" aria-label="Paginas">
        <button type="button" aria-label="Anterior">
            <Icon className="h-4 w-5 text-[#999]" box="0 0 20 16">
                <path d="M20 11H1.500M6 7l-4.500 4L6 15" strokeWidth="1.500" />
            </Icon>
        </button>
        <button type="button" className="mx-[17px] size-[54px] rounded-[5px] border border-[#263238] bg-[#37474f] text-white" aria-current="page">
            1
        </button>
        <button type="button" aria-label="Siguiente" className="ml-1">
            <Icon className="h-4 w-5 text-[#999]" box="0 0 20 16">
                <path d="M0 11h18.500M14 7l4.500 4-4.500 4" strokeWidth="1.500" />
            </Icon>
        </button>
        <span className="ml-[17px]">1 de 1 total 1</span>
    </nav>
);

const RegionsPanel = () => {
    const [query, setQuery] = useState('');
    const visible = rows.filter((row) => row.provincia.toLowerCase().includes(query.toLowerCase()));

    return (
        <section className="rounded-[6px] border-x-2 border-b-2 border-[#e0e0e0] bg-white shadow-[0_2px_5px_rgba(0,0,0,0.12)]">
            <h1 className="h-[86px] rounded-t-[5px] border-b-2 border-[#303f9f] bg-[#3f51b5] pl-[30px] text-[25px] leading-[86px] text-white">
                Regiones &amp; Votantes
            </h1>
            <div className="flex justify-between px-[30px] pt-[31px]">
                <RegionMap />
                <VotersCard />
            </div>
            <Toolbar query={query} onQuery={setQuery} />
            <RegionsTable rows={visible} />
            <Pagination />
        </section>
    );
};

const App = () => {
    const [active, setActive] = useState('regiones');
    const [isSidebarOpen, setIsSidebarOpen] = useState(true);

    return (
        <div className={`flex h-screen flex-col overflow-hidden bg-white ${roboto}`}>
            <Header onToggle={() => setIsSidebarOpen(!isSidebarOpen)} />
            <div className="flex min-h-0 flex-1">
                {isSidebarOpen && <Sidebar active={active} onSelect={setActive} />}
                <main className="min-w-0 flex-1 pt-[34px] pr-[6px] pl-[30px]">
                    <RegionsPanel />
                </main>
            </div>
        </div>
    );
};

export default App;
